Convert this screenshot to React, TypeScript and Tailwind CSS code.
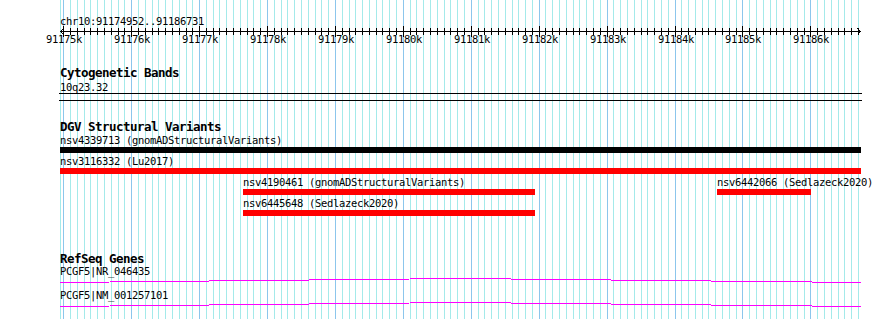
import React from "react";

const START = 91174952;
const END = 91186731;
const X0 = 60;
const SPAN = 800;

const toX = (bp: number) => X0 + ((bp - START) * SPAN) / (END - START);

const gridTicks: { x: number; major: boolean; bp: number }[] = [];
for (let bp = 91175000; bp < END; bp += 100) {
  gridTicks.push({ x: Math.round(toX(bp)) + 0.5, major: bp % 1000 === 0, bp });
}

type Feature = { name: string; left: number; width: number; color: string };

// pixel offsets inside the track (track origin is x=60)
const dgvRows: Feature[][] = [
  [{ name: "nsv4339713 (gnomADStructuralVariants)", left: 0, width: 801, color: "#000000" }],
  [{ name: "nsv3116332 (Lu2017)", left: 0, width: 801, color: "#ff0000" }],
  [
    { name: "nsv4190461 (gnomADStructuralVariants)", left: 183, width: 292, color: "#ff0000" },
    { name: "nsv6442066 (Sedlazeck2020)", left: 657, width: 94, color: "#ff0000" },
  ],
  [{ name: "nsv6445648 (Sedlazeck2020)", left: 183, width: 292, color: "#ff0000" }],
];

const genes = ["PCGF5|NR_046435", "PCGF5|NM_001257101"];

function Grid() {
  return (
    <svg className="absolute inset-0 pointer-events-none" width={890} height={319} shapeRendering="crispEdges">
      <line x1={60.5} y1={0} x2={60.5} y2={319} stroke="#a4eaea" />
      {gridTicks.map((t) => (
        <line key={t.bp} x1={t.x} y1={0} x2={t.x} y2={319} stroke={t.major ? "#8cc6ec" : "#a4eaea"} />
      ))}
    </svg>
  );
}

function Ruler() {
  return (
    <svg className="block -mt-[3px]" width={890} height={22} shapeRendering="crispEdges">
      <line x1={60} y1={7.5} x2={861} y2={7.5} stroke="#000" />
      <polyline points="63.5,4.5 60.5,7.5 63.5,10.5" fill="none" stroke="#000" />
      <polyline points="857.5,4.5 860.5,7.5 857.5,10.5" fill="none" stroke="#000" />
      {gridTicks.map((t) =>
        t.major ? (
          <line key={t.bp} x1={t.x} y1={2} x2={t.x} y2={13} stroke="#000" />
        ) : (
          <line key={t.bp} x1={t.x} y1={4} x2={t.x} y2={11} stroke="#000" />
        )
      )}
      {gridTicks
        .filter((t) => t.major)
        .map((t) => (
          <text
            key={t.bp}
            x={Math.round(t.x)}
            y={19}
            textAnchor="middle"
            fontSize={10.5}
            letterSpacing={-0.32}
            fontFamily='"DejaVu Sans Mono", monospace'
            fill="#000"
          >
            {t.bp / 1000}k
          </text>
        ))}
    </svg>
  );
}

function TrackTitle({ children }: { children: React.ReactNode }) {
  return (
    <div className="text-[12.5px] tracking-[-0.53px] font-bold leading-[14px] whitespace-nowrap">{children}</div>
  );
}

function GeneLine() {
  return (
    <svg className="block -ml-px" width={803} height={13} shapeRendering="crispEdges">
      <polyline points="1,5.5 401,1.5 802,5.5" fill="none" stroke="#ff00ff" strokeWidth={1} />
    </svg>
  );
}

export default function App() {
  return (
    <div
      className="relative w-[890px] h-[319px] overflow-hidden bg-white text-black text-[10.5px] tracking-[-0.32px] leading-[11px]"
      style={{ fontFamily: '"DejaVu Sans Mono", "Liberation Mono", monospace' }}
    >
      <Grid />
      <div className="relative">
        <div className="pl-[60px] pt-[16px] whitespace-nowrap">chr10:91174952..91186731</div>
        <Ruler />

        {/* Cytogenetic Bands */}
        <section className="pl-[60px] mt-[20px]">
          <TrackTitle>Cytogenetic Bands</TrackTitle>
          <div className="mt-[2px]">10q23.32</div>
          <div className="-ml-px w-[803px] h-[8px] border-y border-black" />
        </section>

        {/* DGV Structural Variants */}
        <section className="pl-[60px] mt-[19px]">
          <TrackTitle>DGV Structural Variants</TrackTitle>
          <div className="mt-[1px] w-[802px]">
            {dgvRows.map((row, i) => (
              <div key={i} className="relative h-[21px]">
                {row.map((f) => (
                  <div key={f.name} className="absolute top-0" style={{ left: f.left }}>
                    <div className="whitespace-nowrap">{f.name}</div>
                    <div className="mt-[1px] h-[6px]" style={{ width: f.width, backgroundColor: f.color }} />
                  </div>
                ))}
              </div>
            ))}
          </div>
        </section>

        {/* RefSeq Genes */}
        <section className="pl-[60px] mt-[33px]">
          <TrackTitle>RefSeq Genes</TrackTitle>
          {genes.map((g) => (
            <div key={g}>
              <div className="whitespace-nowrap">{g}</div>
              <GeneLine />
            </div>
          ))}
        </section>
      </div>
    </div>
  );
}
